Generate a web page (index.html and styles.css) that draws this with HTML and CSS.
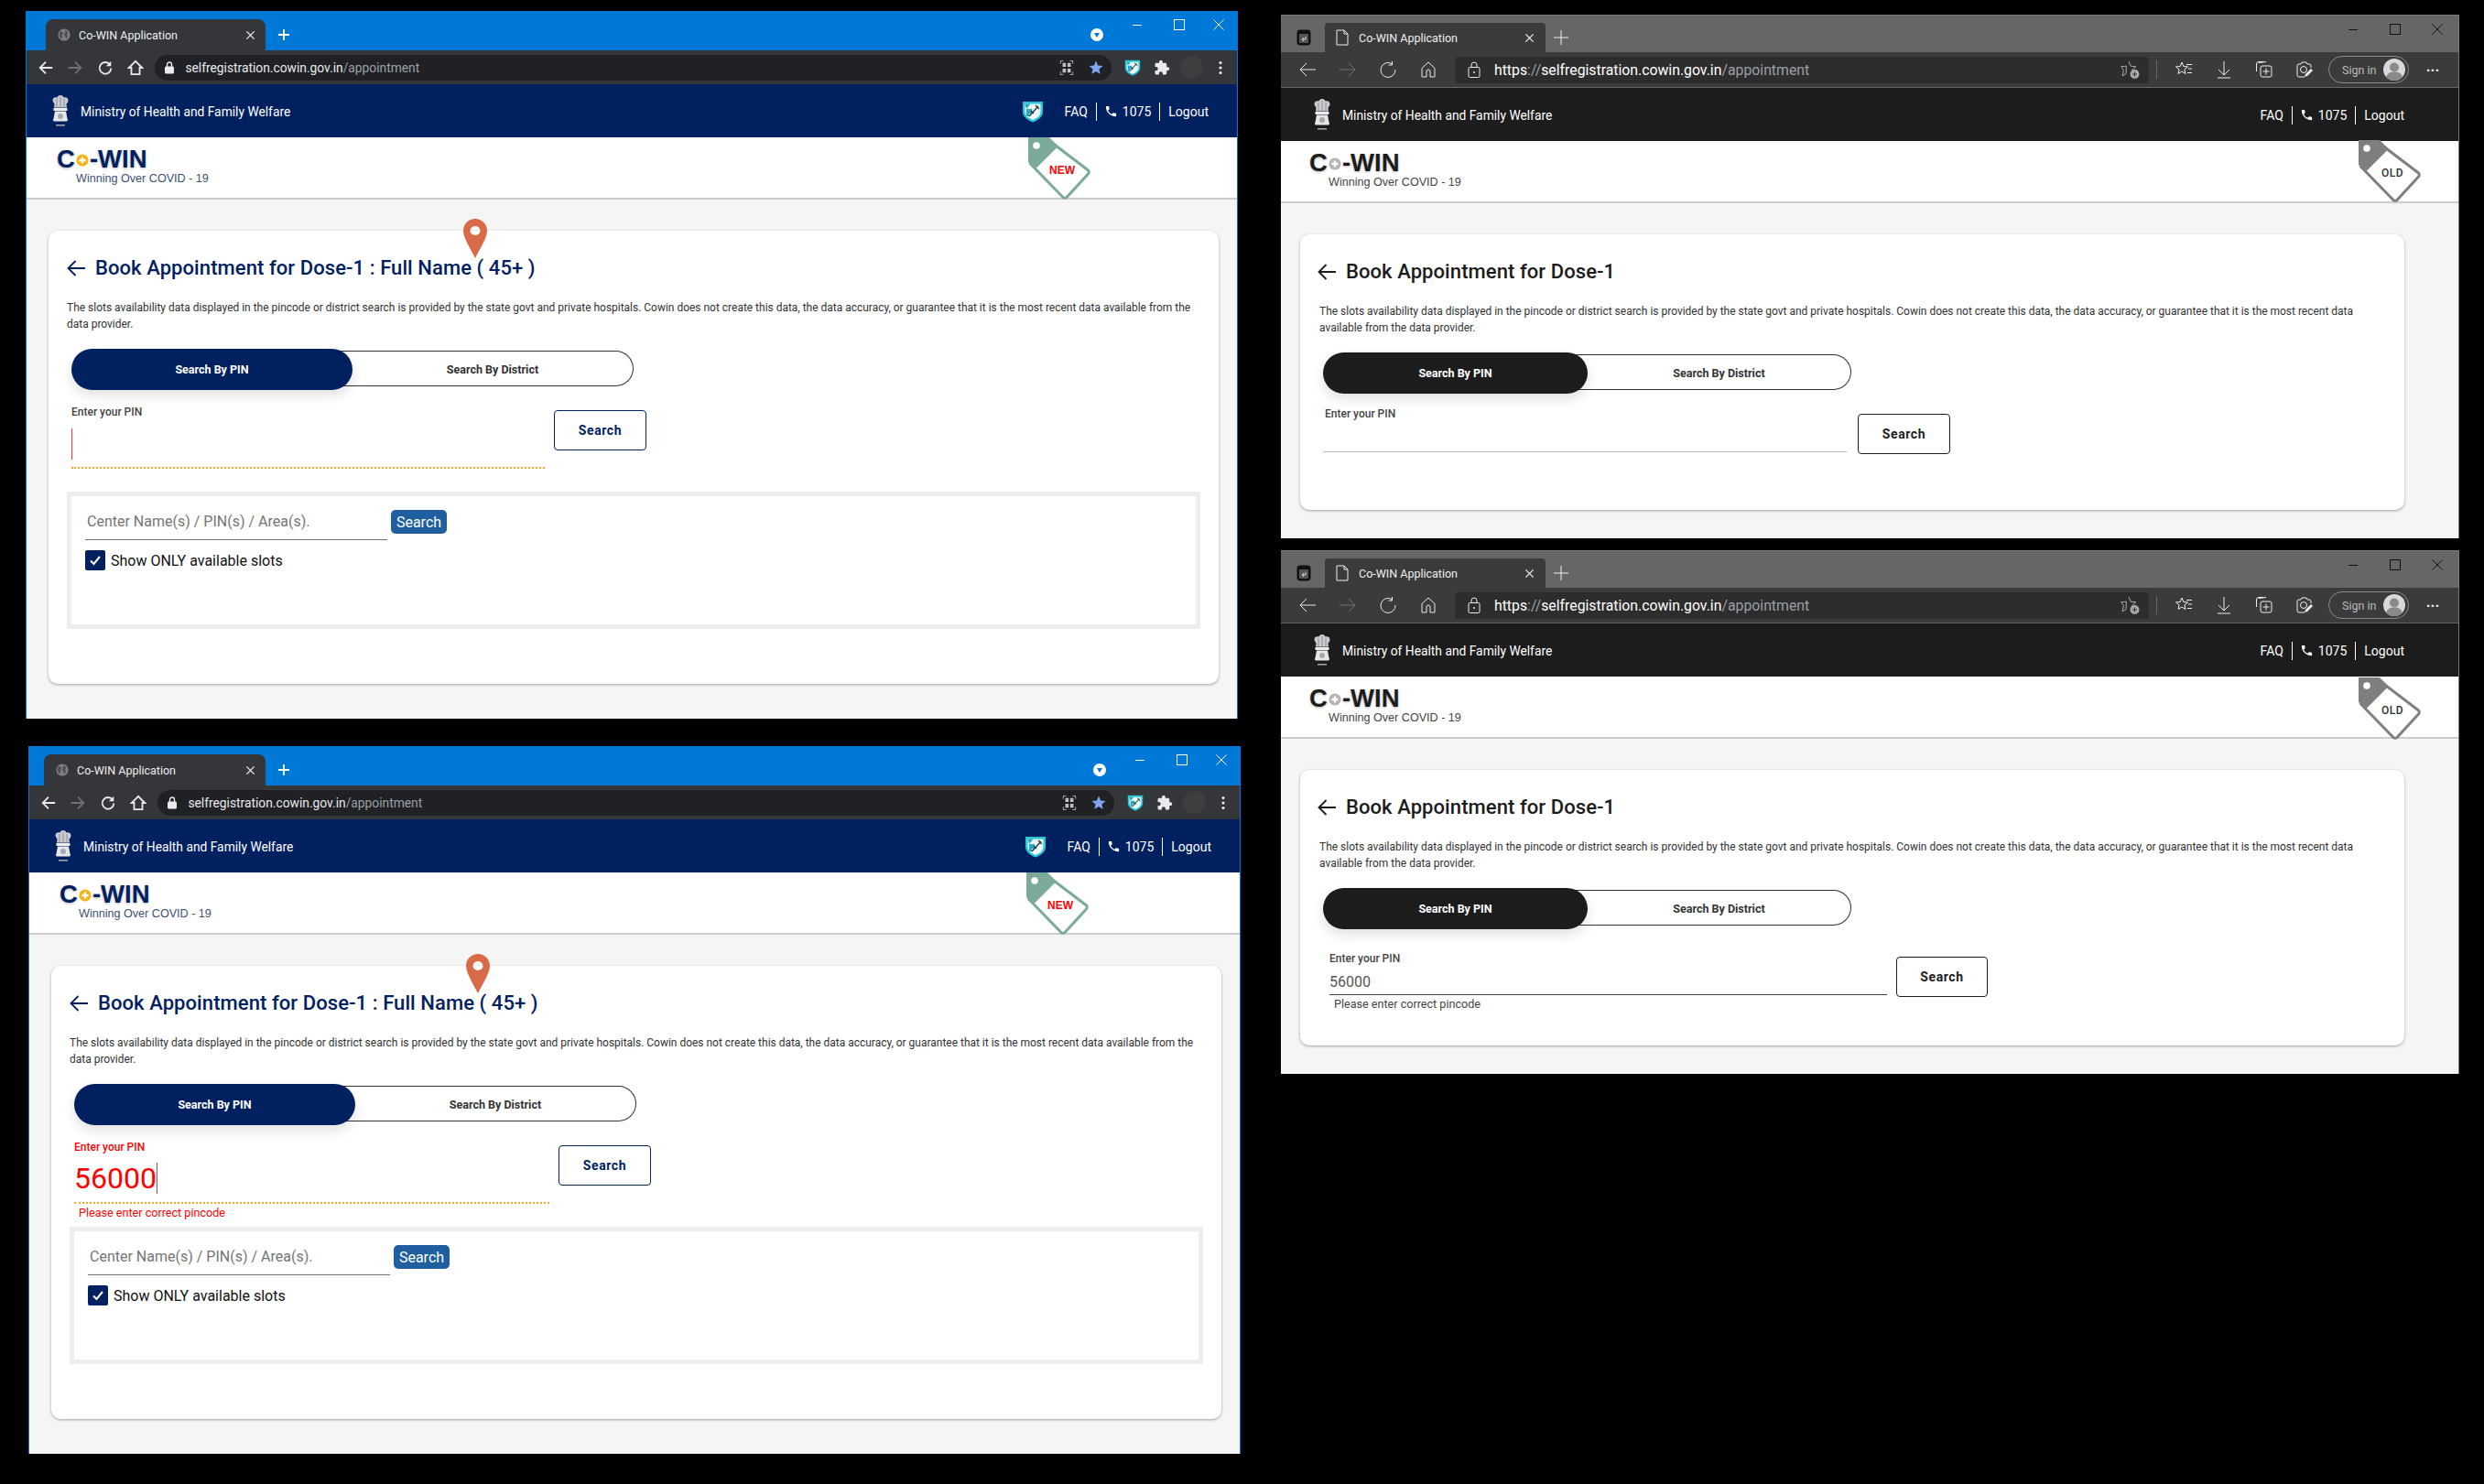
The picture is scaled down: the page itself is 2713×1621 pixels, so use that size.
FILE: index.html
```html
<!DOCTYPE html>
<html lang="en">
<head>
<meta charset="utf-8">
<title>Co-WIN Application</title>
<link rel="stylesheet" href="styles.css">
</head>
<body>
<svg class="defs" aria-hidden="true">
  <symbol id="i-globe" viewBox="0 0 16 16"><circle cx="8" cy="8" r="7.500" fill="#7d7f84"/><path d="M3 3.500l3 1 1 2-2 1.500 1 2.500-1.500 2.500L2 9zM10 2l3 3-1.500 2 1 3-2 3-1-3-1.500-2 1-2.500z" fill="#4a4c50"/></symbol>
  <symbol id="i-x" viewBox="0 0 12 12"><path d="M1.500 1.500l9 9M10.500 1.500l-9 9" fill="none" stroke="currentColor" stroke-width="1.500"/></symbol>
  <symbol id="i-xthin" viewBox="0 0 12 12"><path d="M.5.5l11 11M11.500.5l-11 11" fill="none" stroke="currentColor" stroke-width="1"/></symbol>
  <symbol id="i-plus" viewBox="0 0 16 16"><path d="M8 2v12M2 8h12" fill="none" stroke="currentColor" stroke-width="1.800"/></symbol>
  <symbol id="i-plusthin" viewBox="0 0 18 18"><path d="M9 1v16M1 9h16" fill="none" stroke="currentColor" stroke-width="1"/></symbol>
  <symbol id="i-min" viewBox="0 0 12 12"><path d="M1 6.500h10" fill="none" stroke="currentColor" stroke-width="1"/></symbol>
  <symbol id="i-max" viewBox="0 0 12 12"><rect x=".5" y=".5" width="11" height="11" fill="none" stroke="currentColor" stroke-width="1"/></symbol>
  <symbol id="i-back" viewBox="0 0 20 20"><path d="M18 10H3M10 3l-7 7 7 7" fill="none" stroke="currentColor" stroke-width="2"/></symbol>
  <symbol id="i-arrow" viewBox="0 0 20 20"><path d="M20 10H1.500M9.500 2l-8 8 8 8" fill="none" stroke="currentColor" stroke-width="1.800"/></symbol>
  <symbol id="i-backthin" viewBox="0 0 20 20"><path d="M19 10H2M9 3l-7 7 7 7" fill="none" stroke="currentColor" stroke-width="1"/></symbol>
  <symbol id="i-fwd" viewBox="0 0 20 20"><path d="M2 10h15M10 3l7 7-7 7" fill="none" stroke="currentColor" stroke-width="2"/></symbol>
  <symbol id="i-fwdthin" viewBox="0 0 20 20"><path d="M1 10h17M11 3l7 7-7 7" fill="none" stroke="currentColor" stroke-width="1"/></symbol>
  <symbol id="i-reload" viewBox="0 0 20 20"><path d="M15.500 6A7 7 0 1 0 17 10.500" fill="none" stroke="currentColor" stroke-width="2"/><path d="M17 2v6h-6z" fill="currentColor"/></symbol>
  <symbol id="i-reloadthin" viewBox="0 0 20 20"><path d="M14 3.500A8 8 0 1 0 18 10" fill="none" stroke="currentColor" stroke-width="1"/><path d="M14.500 1v4h-4" fill="none" stroke="currentColor" stroke-width="1"/></symbol>
  <symbol id="i-home" viewBox="0 0 20 20"><path d="M10 2L2 10h3v8h10v-8h3z" fill="none" stroke="currentColor" stroke-width="2"/></symbol>
  <symbol id="i-homethin" viewBox="0 0 20 20"><path d="M3 8.500L10 2l7 6.500V18h-5v-6a2 2 0 0 0-4 0v6H3z" fill="none" stroke="currentColor" stroke-width="1"/></symbol>
  <symbol id="i-lock" viewBox="0 0 12 14"><rect x="1" y="5.500" width="10" height="8" rx="1.500" fill="currentColor"/><path d="M3.500 6V3.500a2.500 2.500 0 0 1 5 0V6" fill="none" stroke="currentColor" stroke-width="1.400"/></symbol>
  <symbol id="i-lockthin" viewBox="0 0 14 18"><rect x="1" y="6.500" width="12" height="11" rx="1.500" fill="none" stroke="currentColor"/><path d="M4 6.500V4a3 3 0 0 1 6 0v2.500" fill="none" stroke="currentColor"/><circle cx="7" cy="12" r="1" fill="currentColor"/></symbol>
  <symbol id="i-qr" viewBox="0 0 16 18"><path d="M.5 4V.5H4M12 .5h3.500V4M15.500 14v3.500H12M4 17.500H.5V14" fill="none" stroke="#bdc1c6"/><path d="M3 3h4v5H3zM9 3h4v5H9zM3 10h4v5H3zM9 10h4v5H9z" fill="#bdc1c6"/></symbol>
  <symbol id="i-star" viewBox="0 0 24 24"><path d="M12 17.270L18.180 21l-1.640-7.030L22 9.240l-7.190-.61L12 2 9.190 8.630 2 9.240l5.460 4.730L5.820 21z" fill="#7fa6f0"/></symbol>
  <symbol id="i-shield" viewBox="0 0 24 24"><path d="M1 1h22v11c0 6-6 9.500-11 11.500C7 21.500 1 18 1 12z" fill="#28c7d6"/><path d="M3.500 3.500h17V12c0 4.500-4.500 7.500-8.500 9-4-1.500-8.500-4.500-8.500-9z" fill="#e8fbfc"/><path d="M5 9h6v5H8v3H5zM3.500 3.500h6L5 9z" fill="#2aa7c4"/><path d="M8 17L18 6M15 5l4 4M10 11l3 3" fill="none" stroke="#333" stroke-width="1.400"/></symbol>
  <symbol id="i-puzzle" viewBox="0 0 24 24"><path d="M20.500 11H19V7c0-1.100-.9-2-2-2h-4V3.500C13 2.120 11.880 1 10.500 1S8 2.120 8 3.500V5H4c-1.100 0-1.990.9-1.990 2v3.800H3.500c1.490 0 2.700 1.210 2.700 2.700s-1.210 2.700-2.700 2.700H2V20c0 1.100.9 2 2 2h3.800v-1.500c0-1.490 1.210-2.700 2.700-2.700 1.490 0 2.700 1.210 2.700 2.700V22H17c1.100 0 2-.9 2-2v-4h1.500c1.380 0 2.500-1.120 2.500-2.500S21.880 11 20.500 11z" fill="currentColor"/></symbol>
  <symbol id="i-dots" viewBox="0 0 4 16"><circle cx="2" cy="2.500" r="1.600" fill="currentColor"/><circle cx="2" cy="8" r="1.600" fill="currentColor"/><circle cx="2" cy="13.500" r="1.600" fill="currentColor"/></symbol>
  <symbol id="i-drop" viewBox="0 0 14 14"><circle cx="7" cy="7" r="7" fill="#fff"/><path d="M4 5h6L7 10z" fill="#0078d7"/></symbol>
  <symbol id="i-side" viewBox="0 0 16 18"><rect x="1" y="1" width="14" height="16" rx="2.500" fill="#111" stroke="#111"/><rect x="3" y="5" width="10" height="10" fill="#555"/><path d="M10 8v3H6M8 9l-2 2 2 2" fill="none" stroke="#ddd"/></symbol>
  <symbol id="i-doc" viewBox="0 0 14 18"><path d="M1 1h8l4 4v12H1zM9 1v4h4" fill="none" stroke="currentColor"/></symbol>
  <symbol id="i-starplus" viewBox="0 0 22 22"><path d="M9 2l2.200 5.200 5.600.5-4.200 3.700 1 3.600M6 15.500L2 18l1.400-6.500L.8 7.700l5.600-.5z" fill="none" stroke="#aaa"/><circle cx="15.500" cy="16" r="5" fill="#aaa"/><path d="M13 16h5M15.500 13.500v5" stroke="#333" stroke-width="1"/></symbol>
  <symbol id="i-fav" viewBox="0 0 20 20"><path d="M8 2l1.800 4.500 4.700.4-3.600 3 1.100 4.600L8 12l-4 2.500 1.100-4.600-3.600-3 4.700-.4z" fill="none" stroke="#eee"/><path d="M13 4.500h6M15 9h4M14 13.500h5" stroke="#eee"/></symbol>
  <symbol id="i-down" viewBox="0 0 20 20"><path d="M10 1v14M4 10l6 6 6-6M3 19h14" fill="none" stroke="#eee"/></symbol>
  <symbol id="i-coll" viewBox="0 0 20 20"><path d="M9 1.500H4A2.500 2.500 0 0 0 1.500 4v8M12 1.500l-8 1" fill="none" stroke="#eee"/><rect x="6" y="6" width="12" height="12" rx="2" fill="none" stroke="#eee"/><path d="M12 8.500v7M8.500 12h7" stroke="#eee"/></symbol>
  <symbol id="i-shot" viewBox="0 0 20 20"><path d="M17 8V6a2 2 0 0 0-2-2h-2l-1-2H7L6 4H4a2 2 0 0 0-2 2v10a2 2 0 0 0 2 2h6" fill="none" stroke="#eee"/><circle cx="9" cy="10" r="3.500" fill="none" stroke="#eee"/><path d="M10 18l1-3 6-6 2 2-6 6z" fill="#eee"/></symbol>
  <symbol id="i-user" viewBox="0 0 24 24"><circle cx="12" cy="12" r="12" fill="#d9d9d9"/><circle cx="12" cy="9.500" r="5" fill="#8a8a8a"/><path d="M3 20c2-4.500 5-5.500 9-5.500s7 1 9 5.500a12 12 0 0 1-18 0z" fill="#8a8a8a"/></symbol>
  <symbol id="i-phone" viewBox="0 0 24 24"><path d="M6.620 10.790c1.440 2.830 3.760 5.140 6.590 6.590l2.200-2.200c.27-.27.67-.36 1.020-.24 1.120.37 2.330.57 3.570.57.55 0 1 .45 1 1V20c0 .55-.45 1-1 1-9.390 0-17-7.610-17-17 0-.55.45-1 1-1h3.500c.55 0 1 .45 1 1 0 1.250.2 2.450.57 3.570.11.35.03.74-.25 1.020l-2.200 2.200z" fill="currentColor"/></symbol>
  <symbol id="i-emblem" viewBox="0 0 22 36"><path d="M11 0c2 0 3 1 3.500 2.500 2-.8 5 .2 5 3 0 2-1 3-2 4l.5 4H4l.5-4c-1-1-2-3-2-4 0-2.800 3-3.800 5-3C8 1 9 0 11 0z" fill="#c9cbd0"/><path d="M7 4v9M15 4v9M11 2v11" stroke="#7f838c" stroke-width=".8"/><rect x="3.500" y="14" width="15" height="3" fill="#eceded"/><path d="M5 17.500h12l1.500 8c1 1 .5 3-1 3h-13c-1.500 0-2-2-1-3z" fill="#e6e7e9"/><circle cx="11" cy="23" r="3" fill="#a6a9b0"/><rect x="6" y="32" width="10" height="1.600" fill="#9ea2aa"/></symbol>
  <symbol id="i-cross" viewBox="0 0 16 16"><circle cx="8" cy="8" r="7.500" fill="currentColor"/><path d="M8 4v8M4 8h8" stroke="#fff" stroke-width="2.600"/></symbol>
  <symbol id="i-tag" viewBox="0 0 68 68"><path d="M22 1.500L66 38 40 66 1.500 28" fill="#fff"/><path d="M22 1.500l10 9L65.500 36c1 1 1 3 0 4L42 65.500c-1 1-3 1-4 0L1.500 28" fill="#fff" stroke="currentColor" stroke-width="3" stroke-linejoin="round"/><path d="M0 0h23l9.500 10L9 33.500 0 27z" fill="currentColor"/><circle cx="9" cy="9" r="3.800" fill="#fff"/></symbol>
  <symbol id="i-pin" viewBox="0 0 26 43"><path fill-rule="evenodd" d="M13 0C6 0 0 5.500 0 13c0 8 8 20 13 30 5-10 13-22 13-30C26 5.500 20 0 13 0zm0 8a5.500 5 0 1 1 0 10 5.500 5 0 0 1 0-10z" fill="#d96a48"/></symbol>
  <symbol id="i-check" viewBox="0 0 22 22"><path d="M6 11.500l3.500 3.500L16 7" fill="none" stroke="#fff" stroke-width="2"/></symbol>
</svg>

<main class="desktop">

  <section class="win chrome pos-a">
    <div class="strip">
      <div class="tab"><svg class="i14"><use href="#i-globe"/></svg><span class="tab-title">Co-WIN Application</span><svg class="tab-x"><use href="#i-x"/></svg></div>
      <svg class="new-tab"><use href="#i-plus"/></svg>
      <svg class="drop"><use href="#i-drop"/></svg>
      <div class="ctrls"><span class="ctrl"><svg class="i12"><use href="#i-min"/></svg></span><span class="ctrl"><svg class="i12"><use href="#i-max"/></svg></span><span class="ctrl"><svg class="i12"><use href="#i-xthin"/></svg></span></div>
    </div>
    <div class="bar">
      <div class="nav"><span class="slot"><svg class="i18"><use href="#i-back"/></svg></span><span class="slot dim"><svg class="i18"><use href="#i-fwd"/></svg></span><span class="slot"><svg class="i18"><use href="#i-reload"/></svg></span><span class="slot"><svg class="i18"><use href="#i-home"/></svg></span></div>
      <div class="addr"><svg class="lock"><use href="#i-lock"/></svg><span class="url">selfregistration.cowin.gov.in<span class="url-dim">/appointment</span></span><span class="slot push"><svg class="i16"><use href="#i-qr"/></svg></span><span class="slot"><svg class="i18"><use href="#i-star"/></svg></span></div>
      <span class="slot"><svg class="i18"><use href="#i-shield"/></svg></span><span class="slot"><svg class="i18"><use href="#i-puzzle"/></svg></span><span class="slot"><span class="avatar"></span></span><span class="slot"><svg class="dots"><use href="#i-dots"/></svg></span>
    </div>
    <header class="hdr"><svg class="emblem"><use href="#i-emblem"/></svg><span>Ministry of Health and Family Welfare</span>
      <div class="links"><svg class="i24"><use href="#i-shield"/></svg><span class="faq">FAQ</span><span class="sep"></span><svg class="ph"><use href="#i-phone"/></svg><span>1075</span><span class="sep"></span><span>Logout</span></div>
    </header>
    <div class="logo-bar"><div class="brand">C<svg class="brand-o"><use href="#i-cross"/></svg>-WIN</div><div class="tagline">Winning Over COVID - 19</div>
      <svg class="tag" viewBox="0 0 68 68"><use href="#i-tag"/><text class="tag-new" x="37" y="40" text-anchor="middle">NEW</text></svg>
    </div>
    <div class="page">
      <div class="card">
        <svg class="pin"><use href="#i-pin"/></svg>
        <h1 class="title"><svg class="title-back"><use href="#i-arrow"/></svg>Book Appointment for Dose-1 : Full Name ( 45+ )</h1>
        <p class="note">The slots availability data displayed in the pincode or district search is provided by the state govt and private hospitals. Cowin does not create this data, the data accuracy, or guarantee that it is the most recent data available from the data provider.</p>
        <div class="toggle"><div class="seg-on">Search By PIN</div><div class="seg-off">Search By District</div></div>
        <div class="pin-row">
          <div class="field"><div class="field-label">Enter your PIN</div><div class="field-input"><span class="caret"></span></div></div>
          <button class="btn-search">Search</button>
        </div>
        <div class="filter">
          <div class="filter-row"><div class="filter-input">Center Name(s) / PIN(s) / Area(s).</div><button class="btn-filter">Search</button></div>
          <div class="check-row"><span class="check"><svg class="i22"><use href="#i-check"/></svg></span>Show ONLY available slots</div>
        </div>
      </div>
    </div>
  </section>

  <section class="win chrome chrome-alt pos-b">
    <div class="strip">
      <div class="tab"><svg class="i14"><use href="#i-globe"/></svg><span class="tab-title">Co-WIN Application</span><svg class="tab-x"><use href="#i-x"/></svg></div>
      <svg class="new-tab"><use href="#i-plus"/></svg>
      <svg class="drop"><use href="#i-drop"/></svg>
      <div class="ctrls"><span class="ctrl"><svg class="i12"><use href="#i-min"/></svg></span><span class="ctrl"><svg class="i12"><use href="#i-max"/></svg></span><span class="ctrl"><svg class="i12"><use href="#i-xthin"/></svg></span></div>
    </div>
    <div class="bar">
      <div class="nav"><span class="slot"><svg class="i18"><use href="#i-back"/></svg></span><span class="slot dim"><svg class="i18"><use href="#i-fwd"/></svg></span><span class="slot"><svg class="i18"><use href="#i-reload"/></svg></span><span class="slot"><svg class="i18"><use href="#i-home"/></svg></span></div>
      <div class="addr"><svg class="lock"><use href="#i-lock"/></svg><span class="url">selfregistration.cowin.gov.in<span class="url-dim">/appointment</span></span><span class="slot push"><svg class="i16"><use href="#i-qr"/></svg></span><span class="slot"><svg class="i18"><use href="#i-star"/></svg></span></div>
      <span class="slot"><svg class="i18"><use href="#i-shield"/></svg></span><span class="slot"><svg class="i18"><use href="#i-puzzle"/></svg></span><span class="slot"><span class="avatar"></span></span><span class="slot"><svg class="dots"><use href="#i-dots"/></svg></span>
    </div>
    <header class="hdr"><svg class="emblem"><use href="#i-emblem"/></svg><span>Ministry of Health and Family Welfare</span>
      <div class="links"><svg class="i24"><use href="#i-shield"/></svg><span class="faq">FAQ</span><span class="sep"></span><svg class="ph"><use href="#i-phone"/></svg><span>1075</span><span class="sep"></span><span>Logout</span></div>
    </header>
    <div class="logo-bar"><div class="brand">C<svg class="brand-o"><use href="#i-cross"/></svg>-WIN</div><div class="tagline">Winning Over COVID - 19</div>
      <svg class="tag" viewBox="0 0 68 68"><use href="#i-tag"/><text class="tag-new" x="37" y="40" text-anchor="middle">NEW</text></svg>
    </div>
    <div class="page">
      <div class="card">
        <svg class="pin"><use href="#i-pin"/></svg>
        <h1 class="title"><svg class="title-back"><use href="#i-arrow"/></svg>Book Appointment for Dose-1 : Full Name ( 45+ )</h1>
        <p class="note">The slots availability data displayed in the pincode or district search is provided by the state govt and private hospitals. Cowin does not create this data, the data accuracy, or guarantee that it is the most recent data available from the data provider.</p>
        <div class="toggle"><div class="seg-on">Search By PIN</div><div class="seg-off">Search By District</div></div>
        <div class="pin-row is-error">
          <div class="field"><div class="field-label">Enter your PIN</div><div class="field-input big-value">56000<span class="caret"></span></div><div class="field-err">Please enter correct pincode</div></div>
          <button class="btn-search">Search</button>
        </div>
        <div class="filter">
          <div class="filter-row"><div class="filter-input">Center Name(s) / PIN(s) / Area(s).</div><button class="btn-filter">Search</button></div>
          <div class="check-row"><span class="check"><svg class="i22"><use href="#i-check"/></svg></span>Show ONLY available slots</div>
        </div>
      </div>
    </div>
  </section>

  <section class="win edge pos-c">
    <div class="strip">
      <svg class="side"><use href="#i-side"/></svg>
      <div class="tab"><svg class="doc"><use href="#i-doc"/></svg><span class="tab-title">Co-WIN Application</span><svg class="tab-x"><use href="#i-x"/></svg></div>
      <svg class="new-tab"><use href="#i-plusthin"/></svg>
      <div class="ctrls"><span class="ctrl"><svg class="i12"><use href="#i-min"/></svg></span><span class="ctrl"><svg class="i12"><use href="#i-max"/></svg></span><span class="ctrl"><svg class="i12"><use href="#i-xthin"/></svg></span></div>
    </div>
    <div class="bar">
      <div class="nav"><span class="slot"><svg class="i20"><use href="#i-backthin"/></svg></span><span class="slot dim"><svg class="i20"><use href="#i-fwdthin"/></svg></span><span class="slot"><svg class="i20"><use href="#i-reloadthin"/></svg></span><span class="slot"><svg class="i20"><use href="#i-homethin"/></svg></span></div>
      <div class="addr"><svg class="lock"><use href="#i-lockthin"/></svg><span class="url">https<span class="url-dim">://</span>selfregistration.cowin.gov.in<span class="url-dim">/appointment</span></span><svg class="i22 push"><use href="#i-starplus"/></svg></div>
      <span class="bar-sep"></span>
      <span class="slot"><svg class="i20"><use href="#i-fav"/></svg></span><span class="slot"><svg class="i20"><use href="#i-down"/></svg></span><span class="slot"><svg class="i20"><use href="#i-coll"/></svg></span><span class="slot"><svg class="i20"><use href="#i-shot"/></svg></span>
      <span class="signin">Sign in<svg class="i24"><use href="#i-user"/></svg></span>
      <span class="more">···</span>
    </div>
    <header class="hdr"><svg class="emblem"><use href="#i-emblem"/></svg><span>Ministry of Health and Family Welfare</span>
      <div class="links"><span class="faq">FAQ</span><span class="sep"></span><svg class="ph"><use href="#i-phone"/></svg><span>1075</span><span class="sep"></span><span>Logout</span></div>
    </header>
    <div class="logo-bar"><div class="brand">C<svg class="brand-o"><use href="#i-cross"/></svg>-WIN</div><div class="tagline">Winning Over COVID - 19</div>
      <svg class="tag" viewBox="0 0 68 68"><use href="#i-tag"/><text class="tag-old" x="37" y="40" text-anchor="middle">OLD</text></svg>
    </div>
    <div class="page">
      <div class="card">
        <h1 class="title"><svg class="title-back"><use href="#i-arrow"/></svg>Book Appointment for Dose-1</h1>
        <p class="note">The slots availability data displayed in the pincode or district search is provided by the state govt and private hospitals. Cowin does not create this data, the data accuracy, or guarantee that it is the most recent data available from the data provider.</p>
        <div class="toggle"><div class="seg-on">Search By PIN</div><div class="seg-off">Search By District</div></div>
        <div class="pin-row">
          <div class="field"><div class="field-label">Enter your PIN</div><div class="field-input"></div></div>
          <button class="btn-search">Search</button>
        </div>
      </div>
    </div>
  </section>

  <section class="win edge pos-d">
    <div class="strip">
      <svg class="side"><use href="#i-side"/></svg>
      <div class="tab"><svg class="doc"><use href="#i-doc"/></svg><span class="tab-title">Co-WIN Application</span><svg class="tab-x"><use href="#i-x"/></svg></div>
      <svg class="new-tab"><use href="#i-plusthin"/></svg>
      <div class="ctrls"><span class="ctrl"><svg class="i12"><use href="#i-min"/></svg></span><span class="ctrl"><svg class="i12"><use href="#i-max"/></svg></span><span class="ctrl"><svg class="i12"><use href="#i-xthin"/></svg></span></div>
    </div>
    <div class="bar">
      <div class="nav"><span class="slot"><svg class="i20"><use href="#i-backthin"/></svg></span><span class="slot dim"><svg class="i20"><use href="#i-fwdthin"/></svg></span><span class="slot"><svg class="i20"><use href="#i-reloadthin"/></svg></span><span class="slot"><svg class="i20"><use href="#i-homethin"/></svg></span></div>
      <div class="addr"><svg class="lock"><use href="#i-lockthin"/></svg><span class="url">https<span class="url-dim">://</span>selfregistration.cowin.gov.in<span class="url-dim">/appointment</span></span><svg class="i22 push"><use href="#i-starplus"/></svg></div>
      <span class="bar-sep"></span>
      <span class="slot"><svg class="i20"><use href="#i-fav"/></svg></span><span class="slot"><svg class="i20"><use href="#i-down"/></svg></span><span class="slot"><svg class="i20"><use href="#i-coll"/></svg></span><span class="slot"><svg class="i20"><use href="#i-shot"/></svg></span>
      <span class="signin">Sign in<svg class="i24"><use href="#i-user"/></svg></span>
      <span class="more">···</span>
    </div>
    <header class="hdr"><svg class="emblem"><use href="#i-emblem"/></svg><span>Ministry of Health and Family Welfare</span>
      <div class="links"><span class="faq">FAQ</span><span class="sep"></span><svg class="ph"><use href="#i-phone"/></svg><span>1075</span><span class="sep"></span><span>Logout</span></div>
    </header>
    <div class="logo-bar"><div class="brand">C<svg class="brand-o"><use href="#i-cross"/></svg>-WIN</div><div class="tagline">Winning Over COVID - 19</div>
      <svg class="tag" viewBox="0 0 68 68"><use href="#i-tag"/><text class="tag-old" x="37" y="40" text-anchor="middle">OLD</text></svg>
    </div>
    <div class="page">
      <div class="card">
        <h1 class="title"><svg class="title-back"><use href="#i-arrow"/></svg>Book Appointment for Dose-1</h1>
        <p class="note">The slots availability data displayed in the pincode or district search is provided by the state govt and private hospitals. Cowin does not create this data, the data accuracy, or guarantee that it is the most recent data available from the data provider.</p>
        <div class="toggle"><div class="seg-on">Search By PIN</div><div class="seg-off">Search By District</div></div>
        <div class="pin-row filled">
          <div class="field"><div class="field-label">Enter your PIN</div><div class="field-input">56000</div><div class="field-err">Please enter correct pincode</div></div>
          <button class="btn-search">Search</button>
        </div>
      </div>
    </div>
  </section>

</main>
</body>
</html>
```
FILE: styles.css
```css
* { box-sizing: border-box; }
html, body { margin: 0; padding: 0; background: #000; }
body { font-family: Roboto, "Liberation Sans", sans-serif; }
.defs { position: absolute; width: 0; height: 0; overflow: hidden; }
.desktop { position: relative; width: 2713px; height: 1621px; background: #000; overflow: hidden; }

svg { display: block; flex: none; }
.i12 { width: 12px; height: 12px; }
.i14 { width: 14px; height: 14px; }
.i16 { width: 16px; height: 16px; }
.i18 { width: 18px; height: 18px; }
.i20 { width: 20px; height: 20px; }
.i22 { width: 22px; height: 22px; }
.i24 { width: 24px; height: 24px; }

/* Windows sit on a free canvas */
.win { position: absolute; display: flex; flex-direction: column; overflow: hidden; color: #fff; }
.pos-a { left: 28px; top: 12px; width: 1324px; height: 773px; }
.pos-b { left: 31px; top: 815px; width: 1324px; height: 773px; }
.pos-c { left: 1399px; top: 16px; width: 1287px; height: 572px; }
.pos-d { left: 1399px; top: 601px; width: 1287px; height: 572px; }

.chrome { --brand: #002060; --ink: #002060; --tag: #7ba99a; --cross: #f4b41a; --tagline: #3d4f73; border-left: 1px solid #0078d7; border-right: 1px solid #0078d7; }
.edge { --brand: #1c1c1c; --ink: #1c1c1c; --tag: #7f7f7f; --cross: #b5b5b5; --tagline: #444; border-right: 1px solid #777; }

/* Tab strip */
.strip { display: flex; align-items: flex-end; flex: none; }
.chrome .strip { height: 43px; background: #0078d7; padding-left: 21px; }
.edge .strip { height: 41px; background: #666; border-top: 1px solid #7a7a7a; padding-left: 17px; }
.chrome-alt .strip { padding-left: 16px; }
.tab { display: flex; align-items: center; flex: none; font-size: 12.500px; color: #eee; }
.chrome .tab { width: 240px; height: 34px; background: #35363a; border-radius: 8px 8px 0 0; padding: 0 11px 0 13px; gap: 9px; }
.chrome-alt .tab { width: 242px; }
.edge .tab { width: 241px; height: 32px; margin-left: 15px; background: #3b3b3b; border-radius: 4px 4px 0 0; padding: 0 12px; gap: 11px; }
.tab-title { white-space: nowrap; }
.tab-x { width: 11px; height: 11px; margin-left: auto; color: #e8eaed; }
.new-tab { color: #fff; }
.chrome .new-tab { width: 16px; height: 16px; margin: 0 0 9px 12px; }
.edge .new-tab { width: 18px; height: 18px; margin: 0 0 7px 8px; color: #eee; }
.side { width: 16px; height: 18px; margin-bottom: 7px; }
.doc { width: 14px; height: 18px; color: #eee; }
.drop { width: 14px; height: 14px; margin: 0 14px 10px auto; }
.ctrls { display: flex; align-self: flex-start; }
.edge .ctrls { margin-left: auto; color: #111; }
.ctrl { display: flex; align-items: center; justify-content: center; width: 46px; height: 30px; }
.chrome .ctrl:last-child { width: 40px; }

/* Toolbar */
.bar { display: flex; align-items: center; flex: none; }
.chrome .bar { height: 37px; background: #35363a; padding: 0 2px 0 5px; }
.edge .bar { height: 39px; background: #3b3b3b; border-bottom: 1px solid #666; padding: 0 8px 0 7px; }
.nav { display: flex; flex: none; }
.slot { display: flex; align-items: center; justify-content: center; flex: none; color: #e8eaed; }
.chrome .slot { width: 32px; height: 28px; }
.edge .slot { width: 44px; height: 29px; }
.chrome .nav .slot { width: 31.600px; }
.chrome .nav { gap: 1px; }
.slot.dim { color: #6f7175; }
.push { margin-left: auto; }
.addr { display: flex; align-items: center; flex: 1; min-width: 0; }
.chrome .addr { height: 28px; margin: 0 7px 0 6px; padding: 0 1px 0 10px; background: #202124; border-radius: 14px; }
.edge .addr { height: 29px; margin: 0 8px 0 7px; padding: 0 9px 0 14px; background: #2d2d2d; border-radius: 4px; }
.lock { color: #e8eaed; }
.chrome .lock { width: 12px; height: 14px; }
.edge .lock { width: 14px; height: 18px; }
.url { white-space: nowrap; color: #e8eaed; }
.chrome .url { font-size: 13.800px; margin-left: 11px; }
.edge .url { font-size: 15.800px; margin-left: 15px; color: #fff; }
.url-dim { color: #9aa0a6; }
.avatar { width: 25px; height: 25px; border-radius: 50%; background: #3d3e40; }
.dots { width: 4px; height: 16px; color: #e8eaed; }
.bar-sep { flex: none; width: 1px; height: 20px; margin-right: 7px; background: #666; }
.signin { display: flex; align-items: center; justify-content: space-between; flex: none; width: 88px; height: 30px; margin-left: 4px; padding: 0 3px 0 14px; border: 1px solid #8a8a8a; border-radius: 15px; font-size: 12.500px; color: #bbb; }
.more { flex: none; width: 40px; margin-left: 6px; text-align: center; font-size: 16px; font-weight: 700; line-height: 29px; color: #eee; }

/* Site header */
.hdr { display: flex; align-items: center; flex: none; height: 58px; padding-top: 1px; background: var(--brand); font-size: 13.800px; color: #fff; }
.chrome .hdr { padding-right: 31px; padding-left: 26px; }
.edge .hdr { padding-right: 59px; padding-left: 34px; }
.emblem { width: 22px; height: 36px; margin-right: 11px; }
.links { display: flex; align-items: center; margin-left: auto; font-size: 14px; }
.faq { margin-left: 23px; }
.edge .faq { margin-left: 0; }
.sep { width: 1px; height: 20px; margin: 0 9px; background: #fff; }
.ph { width: 15px; height: 15px; margin: 0 5px 0 -1px; color: #fff; }

/* Logo bar */
.logo-bar { position: relative; flex: none; height: 68px; padding-top: 10px; background: #fff; border-bottom: 2px solid #ccc; }
.chrome .logo-bar { padding-left: 33px; }
.edge .logo-bar { padding-left: 31px; }
.brand { display: flex; align-items: center; height: 27px; font-family: "Liberation Sans", sans-serif; font-size: 27.500px; font-weight: 700; line-height: 27px; color: var(--ink); text-shadow: 0 1px 3px rgba(0,0,0,.3); }
.brand-o { width: 14px; height: 14px; margin: 3px 1px 0 1px; color: var(--cross); }
.tagline { margin-left: 21px; font-family: "Liberation Sans", sans-serif; font-size: 12.600px; line-height: 16px; color: var(--tagline); }
.tag { position: absolute; top: 0; width: 68px; height: 68px; color: var(--tag); }
.chrome .tag { left: 1094px; }
.chrome-alt .tag { left: 1089px; }
.edge .tag { left: 1177px; top: -1px; }
.pos-d .tag { top: 1px; }
.tag-new { font-family: "Liberation Sans", sans-serif; font-size: 12px; font-weight: 700; fill: #f00; }
.tag-old { font-family: Roboto, sans-serif; font-size: 12px; font-weight: 500; letter-spacing: .5px; fill: #333; }

/* Page */
.page { flex: 1; min-height: 0; background: #f5f5f5; padding-top: 34px; }
.chrome .page { padding-left: 24px; padding-right: 20px; }
.edge .page { padding-left: 21px; padding-right: 59px; }
.card { position: relative; background: #fff; border-radius: 10px; box-shadow: 0 1px 3px rgba(0,0,0,.35); padding: 28px 20px 0; color: #333; }
.chrome .card { height: 495px; }
.edge .card { height: 301px; padding-left: 21px; }
.pin { position: absolute; left: 453px; top: -13px; width: 26px; height: 43px; }
.title { display: flex; align-items: center; height: 26px; margin: 0; font-size: 22px; font-weight: 500; letter-spacing: .08px; line-height: 26px; color: var(--ink); }
.title-back { width: 20px; height: 20px; margin-right: 11px; color: var(--ink); }
.edge .title { margin-left: -2px; }
.note { margin: 21px 0 0; font-size: 11.980px; line-height: 18px; color: #333; }

/* Toggle */
.toggle { display: flex; align-items: flex-start; margin: 18px 0 0 5px; font-size: 12.500px; font-weight: 700; }
.chrome .toggle { width: 614px; }
.edge .toggle { width: 577px; margin-left: 4px; }
.seg-on { position: relative; display: flex; align-items: center; justify-content: center; height: 45px; border-radius: 23px; background: var(--brand); color: #fff; box-shadow: 0 6px 14px rgba(0,0,0,.12); }
.chrome .seg-on { width: 307px; }
.edge .seg-on { width: 289px; }
.seg-off { display: flex; align-items: center; justify-content: center; flex: 1; height: 39px; margin: 2px 0 0 -32px; padding: 1px 0 0 32px; border: 1.500px solid #333; border-left: 0; border-radius: 0 20px 20px 0; color: #333; }

/* PIN search */
.pin-row { display: flex; align-items: flex-start; height: 96px; margin: 15px 0 0 5px; }
.field { width: 517px; }
.is-error .field { width: 519px; }
.field-label { height: 18px; font-size: 12px; font-weight: 500; line-height: 18px; color: #444; }
.field-input { display: flex; align-items: center; height: 53px; border-bottom: 2px dotted #f5a623; }
.caret { width: 1px; height: 34px; background: #e53935; }
.big-value { font-size: 32px; padding-bottom: 2px; color: #f00; }
.field-err { padding: 3px 0 0 5px; font-size: 12.600px; line-height: 14px; color: #f00; }
.is-error .field-label { color: #f00; }
.btn-search { flex: none; width: 101px; height: 44px; margin: 7px 0 0 10px; padding: 0; background: #fff; border: 1.500px solid var(--ink); border-radius: 4px; font-family: Roboto, sans-serif; font-size: 14px; font-weight: 700; letter-spacing: .6px; color: var(--ink); }

.edge .pin-row { margin: 13px 0 0 4px; }
.edge .field { width: 572px; }
.edge .field-label { padding-left: 2px; }
.edge .field-input { height: 33px; border-bottom: 1px solid #bbb; }
.edge .btn-search { margin: 9px 0 0 12px; }
.edge .pin-row.filled { margin: 23px 0 0 11px; }
.edge .filled .field { width: 609px; }
.edge .filled .field-label { padding-left: 0; }
.edge .filled .field-input { height: 31px; padding-top: 2px; border-bottom: 1px solid #444; font-size: 16px; color: #555; }
.edge .filled .field-err { color: #444; padding-top: 3px; }
.edge .filled .btn-search { width: 100px; margin: 7px 0 0 10px; }

/* Centre filter */
.filter { height: 150px; margin-top: 0; padding: 8px 15px 0; border: 5px solid #eee; }
.filter-row { display: flex; align-items: flex-start; }
.filter-input { display: flex; align-items: center; width: 330px; height: 40px; padding-left: 2px; border-bottom: 1px solid #757575; font-size: 16px; color: #757575; }
.btn-filter { flex: none; width: 61px; height: 26px; margin: 7px 0 0 4px; padding: 0; border: 0; border-radius: 5px; background: #1f5f9f; font-family: Roboto, sans-serif; font-size: 16px; color: #fff; }
.check-row { display: flex; align-items: center; height: 22px; margin-top: 11px; font-size: 16px; color: #111; }
.check { width: 22px; height: 22px; margin-right: 6px; border-radius: 2px; background: #002060; }
```
